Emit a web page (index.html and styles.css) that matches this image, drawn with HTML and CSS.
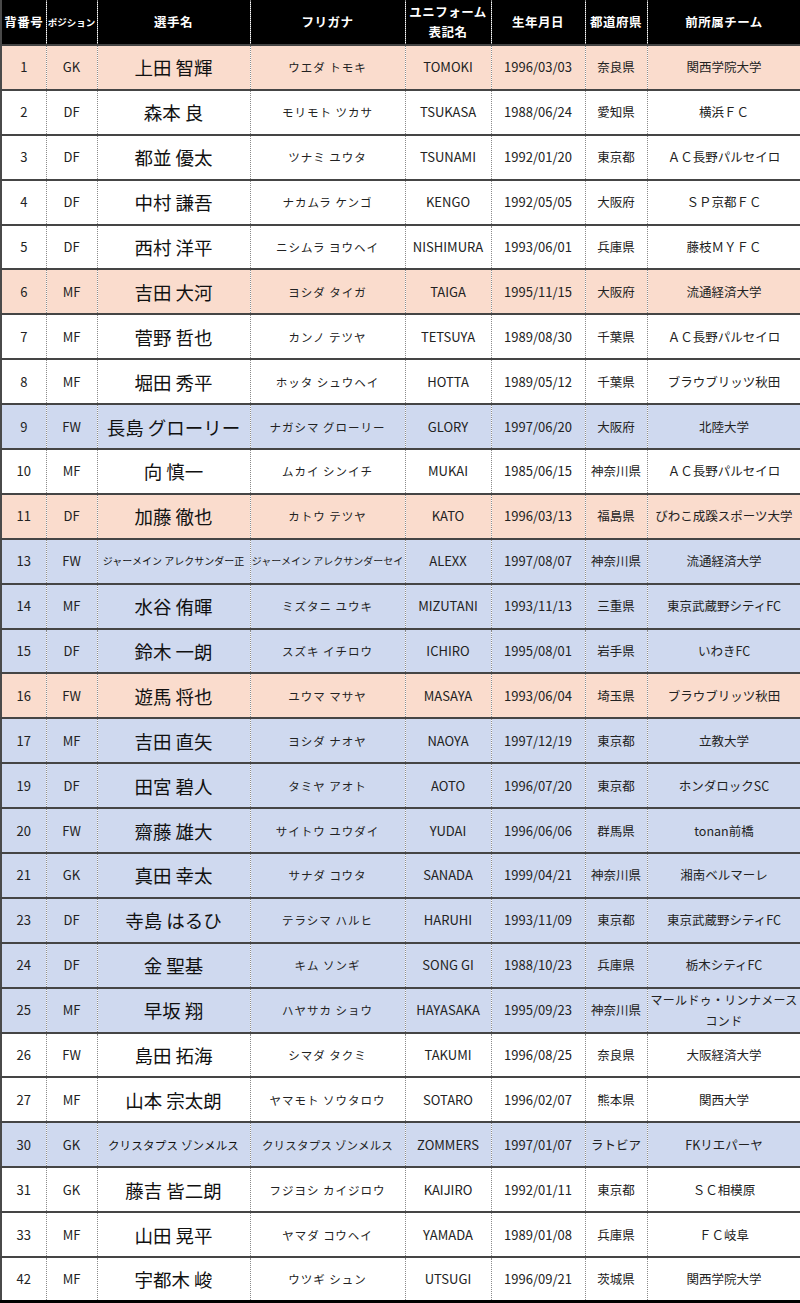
FILE: index.html
```html
<!DOCTYPE html>
<html lang="ja">
<head>
<meta charset="utf-8">
<title>選手一覧</title>
<link rel="stylesheet" href="styles.css">
</head>
<body>
<table class="roster">
<colgroup>
<col class="c-no"><col class="c-pos"><col class="c-name"><col class="c-kana"><col class="c-uni"><col class="c-birth"><col class="c-pref"><col class="c-team">
</colgroup>
<thead>
<tr>
<th>背番号</th><th class="small">ポジション</th><th>選手名</th><th>フリガナ</th><th>ユニフォーム<br>表記名</th><th>生年月日</th><th>都道府県</th><th>前所属チーム</th>
</tr>
</thead>
<tbody>
<tr class="pink"><td>1</td><td>GK</td><td class="name">上田 智輝</td><td class="kana">ウエダ トモキ</td><td>TOMOKI</td><td>1996/03/03</td><td class="jp">奈良県</td><td class="jp">関西学院大学</td></tr>
<tr><td>2</td><td>DF</td><td class="name">森本 良</td><td class="kana">モリモト ツカサ</td><td>TSUKASA</td><td>1988/06/24</td><td class="jp">愛知県</td><td class="jp">横浜ＦＣ</td></tr>
<tr><td>3</td><td>DF</td><td class="name">都並 優太</td><td class="kana">ツナミ ユウタ</td><td>TSUNAMI</td><td>1992/01/20</td><td class="jp">東京都</td><td class="jp">ＡＣ長野パルセイロ</td></tr>
<tr><td>4</td><td>DF</td><td class="name">中村 謙吾</td><td class="kana">ナカムラ ケンゴ</td><td>KENGO</td><td>1992/05/05</td><td class="jp">大阪府</td><td class="jp">ＳＰ京都ＦＣ</td></tr>
<tr><td>5</td><td>DF</td><td class="name">西村 洋平</td><td class="kana">ニシムラ ヨウヘイ</td><td>NISHIMURA</td><td>1993/06/01</td><td class="jp">兵庫県</td><td class="jp">藤枝ＭＹＦＣ</td></tr>
<tr class="pink"><td>6</td><td>MF</td><td class="name">吉田 大河</td><td class="kana">ヨシダ タイガ</td><td>TAIGA</td><td>1995/11/15</td><td class="jp">大阪府</td><td class="jp">流通経済大学</td></tr>
<tr><td>7</td><td>MF</td><td class="name">菅野 哲也</td><td class="kana">カンノ テツヤ</td><td>TETSUYA</td><td>1989/08/30</td><td class="jp">千葉県</td><td class="jp">ＡＣ長野パルセイロ</td></tr>
<tr><td>8</td><td>MF</td><td class="name">堀田 秀平</td><td class="kana">ホッタ シュウヘイ</td><td>HOTTA</td><td>1989/05/12</td><td class="jp">千葉県</td><td class="jp">ブラウブリッツ秋田</td></tr>
<tr class="blue"><td>9</td><td>FW</td><td class="name">長島 グローリー</td><td class="kana">ナガシマ グローリー</td><td>GLORY</td><td>1997/06/20</td><td class="jp">大阪府</td><td class="jp">北陸大学</td></tr>
<tr><td>10</td><td>MF</td><td class="name">向 慎一</td><td class="kana">ムカイ シンイチ</td><td>MUKAI</td><td>1985/06/15</td><td class="jp">神奈川県</td><td class="jp">ＡＣ長野パルセイロ</td></tr>
<tr class="pink"><td>11</td><td>DF</td><td class="name">加藤 徹也</td><td class="kana">カトウ テツヤ</td><td>KATO</td><td>1996/03/13</td><td class="jp">福島県</td><td class="jp">びわこ成蹊スポーツ大学</td></tr>
<tr class="blue"><td>13</td><td>FW</td><td class="name tiny">ジャーメイン アレクサンダー正</td><td class="kana tiny">ジャーメイン アレクサンダーセイ</td><td>ALEXX</td><td>1997/08/07</td><td class="jp">神奈川県</td><td class="jp">流通経済大学</td></tr>
<tr class="blue"><td>14</td><td>MF</td><td class="name">水谷 侑暉</td><td class="kana">ミズタニ ユウキ</td><td>MIZUTANI</td><td>1993/11/13</td><td class="jp">三重県</td><td class="jp">東京武蔵野シティFC</td></tr>
<tr class="blue"><td>15</td><td>DF</td><td class="name">鈴木 一朗</td><td class="kana">スズキ イチロウ</td><td>ICHIRO</td><td>1995/08/01</td><td class="jp">岩手県</td><td class="jp">いわきFC</td></tr>
<tr class="pink"><td>16</td><td>FW</td><td class="name">遊馬 将也</td><td class="kana">ユウマ マサヤ</td><td>MASAYA</td><td>1993/06/04</td><td class="jp">埼玉県</td><td class="jp">ブラウブリッツ秋田</td></tr>
<tr class="blue"><td>17</td><td>MF</td><td class="name">吉田 直矢</td><td class="kana">ヨシダ ナオヤ</td><td>NAOYA</td><td>1997/12/19</td><td class="jp">東京都</td><td class="jp">立教大学</td></tr>
<tr class="blue"><td>19</td><td>DF</td><td class="name">田宮 碧人</td><td class="kana">タミヤ アオト</td><td>AOTO</td><td>1996/07/20</td><td class="jp">東京都</td><td class="jp">ホンダロックSC</td></tr>
<tr class="blue"><td>20</td><td>FW</td><td class="name">齋藤 雄大</td><td class="kana">サイトウ ユウダイ</td><td>YUDAI</td><td>1996/06/06</td><td class="jp">群馬県</td><td class="jp">tonan前橋</td></tr>
<tr class="blue"><td>21</td><td>GK</td><td class="name">真田 幸太</td><td class="kana">サナダ コウタ</td><td>SANADA</td><td>1999/04/21</td><td class="jp">神奈川県</td><td class="jp">湘南ベルマーレ</td></tr>
<tr class="blue"><td>23</td><td>DF</td><td class="name">寺島 はるひ</td><td class="kana">テラシマ ハルヒ</td><td>HARUHI</td><td>1993/11/09</td><td class="jp">東京都</td><td class="jp">東京武蔵野シティFC</td></tr>
<tr class="blue"><td>24</td><td>DF</td><td class="name">金 聖基</td><td class="kana">キム ソンギ</td><td>SONG GI</td><td>1988/10/23</td><td class="jp">兵庫県</td><td class="jp">栃木シティFC</td></tr>
<tr class="blue"><td>25</td><td>MF</td><td class="name">早坂 翔</td><td class="kana">ハヤサカ ショウ</td><td>HAYASAKA</td><td>1995/09/23</td><td class="jp">神奈川県</td><td class="jp wrap">マールドゥ・リンナメース<br>コンド</td></tr>
<tr><td>26</td><td>FW</td><td class="name">島田 拓海</td><td class="kana">シマダ タクミ</td><td>TAKUMI</td><td>1996/08/25</td><td class="jp">奈良県</td><td class="jp">大阪経済大学</td></tr>
<tr><td>27</td><td>MF</td><td class="name">山本 宗太朗</td><td class="kana">ヤマモト ソウタロウ</td><td>SOTARO</td><td>1996/02/07</td><td class="jp">熊本県</td><td class="jp">関西大学</td></tr>
<tr class="blue"><td>30</td><td>GK</td><td class="name mid">クリスタプス ゾンメルス</td><td class="kana mid">クリスタプス ゾンメルス</td><td>ZOMMERS</td><td>1997/01/07</td><td class="jp">ラトビア</td><td class="jp">FKリエパーヤ</td></tr>
<tr><td>31</td><td>GK</td><td class="name">藤吉 皆二朗</td><td class="kana">フジヨシ カイジロウ</td><td>KAIJIRO</td><td>1992/01/11</td><td class="jp">東京都</td><td class="jp">ＳＣ相模原</td></tr>
<tr><td>33</td><td>MF</td><td class="name">山田 晃平</td><td class="kana">ヤマダ コウヘイ</td><td>YAMADA</td><td>1989/01/08</td><td class="jp">兵庫県</td><td class="jp">ＦＣ岐阜</td></tr>
<tr><td>42</td><td>MF</td><td class="name">宇都木 峻</td><td class="kana">ウツギ シュン</td><td>UTSUGI</td><td>1996/09/21</td><td class="jp">茨城県</td><td class="jp">関西学院大学</td></tr>
</tbody>
</table>
</body>
</html>
```
FILE: styles.css
```css
html, body {
  margin: 0;
  padding: 0;
  background: #ffffff;
}

.roster {
  width: 800px;
  table-layout: fixed;
  border-collapse: collapse;
  font-family: "Noto Sans CJK JP", "Noto Sans", sans-serif;
  color: #222222;
  border-left: 2px solid #4a4a4a;
  border-bottom: 3px solid #000000;
}

.c-no { width: 45px; }
.c-pos { width: 51px; }
.c-name { width: 153px; }
.c-kana { width: 155px; }
.c-uni { width: 86px; }
.c-birth { width: 94px; }
.c-pref { width: 62px; }
.c-team { width: 154px; }

.roster th,
.roster td {
  padding: 0;
  text-align: center;
  vertical-align: middle;
  border-left: 1px dotted #8a8a8a;
  border-right: 1px dotted #8a8a8a;
  white-space: nowrap;
  overflow: hidden;
}

.roster thead tr {
  height: 45px;
  background: #000000;
}

.roster th {
  color: #ffffff;
  font-weight: 700;
  font-size: 12.5px;
  line-height: 20px;
  letter-spacing: 0.5px;
}

.roster th.small {
  font-size: 9.5px;
  letter-spacing: 0;
}

.roster tbody tr {
  height: 44.9px;
  background: #ffffff;
}

.roster tbody td {
  border-top: 2px solid #454545;
  font-size: 13px;
  line-height: 18px;
}

.roster tbody tr.pink { background: #fadccd; }
.roster tbody tr.blue { background: #cfd9ef; }

.roster td.name {
  font-size: 18.5px;
  color: #111111;
}

.roster td.kana {
  font-size: 11.5px;
  letter-spacing: 1px;
}

.roster td.jp {
  font-size: 12.5px;
}

.roster td.name.tiny,
.roster td.kana.tiny {
  font-size: 10px;
  letter-spacing: 0;
}

.roster td.name.mid,
.roster td.kana.mid {
  font-size: 11.5px;
  letter-spacing: 0.2px;
}

.roster td.wrap {
  font-size: 12px;
  line-height: 21px;
  letter-spacing: 0.3px;
}
```
